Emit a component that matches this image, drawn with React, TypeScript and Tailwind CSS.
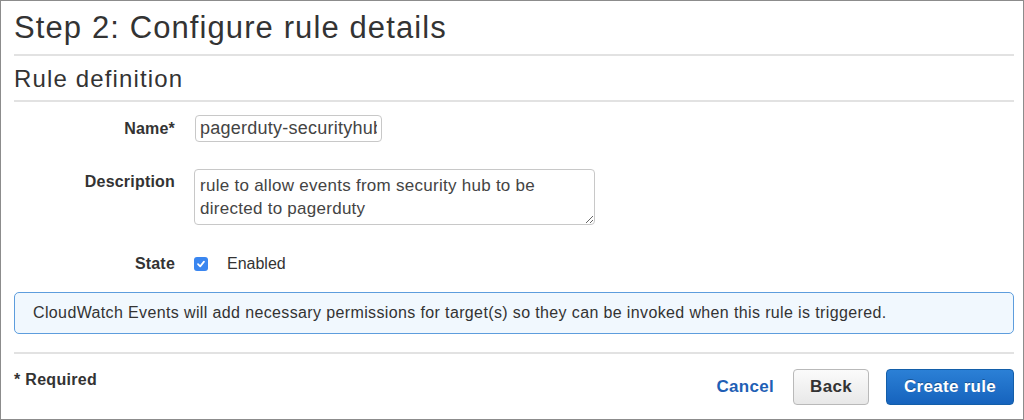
import React from 'react';

const App: React.FC = () => {
  return (
    <div className="w-[1024px] h-[420px] bg-white border border-[#8c8c8c] font-['Liberation_Sans',Arial,sans-serif] text-[#333]">
      <div className="pl-[13px] pr-[9px]">
        {/* page title */}
        <h1 className="text-[31px] tracking-[1.1px] leading-[34px] pt-[10px] pb-[9px] border-b-2 border-[#e2e2e2]">
          Step 2: Configure rule details
        </h1>
        <h2 className="text-[24px] tracking-[1.15px] leading-[26px] pt-[10px] pb-[8px] border-b-2 border-[#e2e2e2]">
          Rule definition
        </h2>

        {/* form */}
        <div className="mt-[13px] grid grid-cols-[161px_1fr] gap-x-[19px]">
          <label className="text-right font-bold text-[16px] tracking-[0.2px] leading-[27px]">Name*</label>
          <div>
            <input
              readOnly
              defaultValue="pagerduty-securityhub"
              className="ml-px w-[187px] h-[27px] border border-[#c8c8c8] rounded-[4px] px-[4px] text-[18px] tracking-[0.25px] text-[#444] outline-none bg-white"
            />
          </div>

          <label className="mt-[27px] pt-[3px] text-right font-bold text-[16px] tracking-[0.2px] leading-[20px]">Description</label>
          <div className="mt-[27px]">
            <textarea
              readOnly
              defaultValue={'rule to allow events from security hub to be\ndirected to pagerduty'}
              className="block w-[401px] h-[56px] border border-[#c8c8c8] rounded-[4px] px-[5px] pt-[4px] text-[17px] tracking-[0.27px] leading-[23px] text-[#444] outline-none bg-white"
            />
          </div>

          <label className="mt-[29px] text-right font-bold text-[16px] tracking-[0.2px] leading-[20px]">State</label>
          <div className="mt-[29px] flex items-center h-[20px]">
            <span className="w-[14px] h-[14px] rounded-[3px] bg-[#3a86f0] flex items-center justify-center">
              <svg width="10" height="10" viewBox="0 0 10 10">
                <path d="M2 5.2 L4.2 7.4 L8 2.6" fill="none" stroke="white" strokeWidth="1.7" strokeLinecap="round" strokeLinejoin="round" />
              </svg>
            </span>
            <span className="ml-[19px] text-[16px] leading-[20px]">Enabled</span>
          </div>
        </div>

        {/* info box */}
        <div className="mt-[18px] h-[42px] border border-[#5d9ddd] bg-[#f1f8fe] rounded-[5px] pl-[18px] flex items-center text-[16px] tracking-[0.37px]">
          CloudWatch Events will add necessary permissions for target(s) so they can be invoked when this rule is triggered.
        </div>

        <div className="mt-[18px] border-t-2 border-[#e2e2e2]" />

        {/* footer */}
        <div className="mt-[15px] flex items-start justify-between">
          <span className="pt-[1px] font-bold text-[16px] tracking-[0.3px] leading-[20px]">* Required</span>
          <div className="flex items-center">
            <button className="text-[17px] tracking-[0.3px] font-bold text-[#1f5fb5]">Cancel</button>
            <button className="ml-[19px] w-[76px] h-[36px] rounded-[4px] border border-[#b9b9b9] bg-gradient-to-b from-[#fbfbfb] to-[#e8e8e8] text-[17px] tracking-[0.3px] font-bold text-[#333]">
              Back
            </button>
            <button className="ml-[17px] w-[128px] h-[36px] rounded-[4px] border border-[#135ea9] bg-gradient-to-b from-[#2b80d6] to-[#1663bd] text-[17px] tracking-[0.3px] font-bold text-white [text-shadow:0_-1px_0_rgba(0,0,0,0.3)]">
              Create rule
            </button>
          </div>
        </div>
      </div>
    </div>
  );
};

export default App;
